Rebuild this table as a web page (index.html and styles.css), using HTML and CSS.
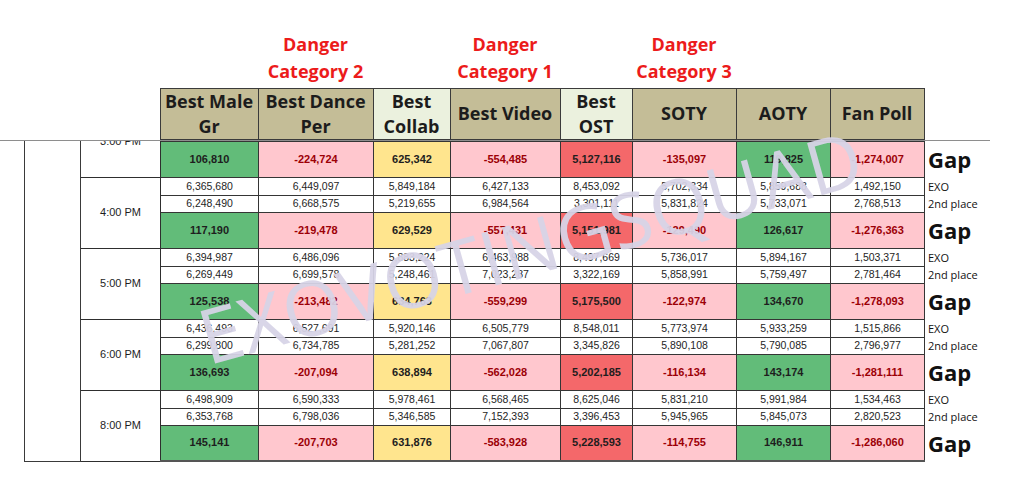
FILE: index.html
```html
<!DOCTYPE html>
<html>
<head>
<meta charset="utf-8">
<link rel="stylesheet" href="styles.css">
</head>
<body>
<div class="sheet">
  <table class="head">
    <colgroup>
      <col class="c-left"><col class="c-time">
      <col class="c-male"><col class="c-dance"><col class="c-collab"><col class="c-video"><col class="c-ost"><col class="c-soty"><col class="c-aoty"><col class="c-fan">
    </colgroup>
    <tr class="danger-row">
      <td colspan="3"></td>
      <td class="danger">Danger<br>Category 2</td>
      <td></td>
      <td class="danger">Danger<br>Category 1</td>
      <td></td>
      <td class="danger">Danger<br>Category 3</td>
      <td colspan="2"></td>
    </tr>
    <tr class="hdr-row">
      <td colspan="2"></td>
      <th class="tan">Best Male<br>Gr</th>
      <th class="tan">Best Dance<br>Per</th>
      <th class="mint">Best<br>Collab</th>
      <th class="tan">Best Video</th>
      <th class="mint">Best<br>OST</th>
      <th class="tan">SOTY</th>
      <th class="tan">AOTY</th>
      <th class="tan">Fan Poll</th>
    </tr>
  </table>

  <div class="pane">
    <table class="grid">
      <colgroup>
        <col class="c-left"><col class="c-time">
        <col class="c-male"><col class="c-dance"><col class="c-collab"><col class="c-video"><col class="c-ost"><col class="c-soty"><col class="c-aoty"><col class="c-fan"><col class="c-label">
      </colgroup>
      <!-- 3:00 PM (scrolled partly out of view) -->
      <tr class="r1">
        <td class="leftcol" rowspan="15"></td>
        <td class="time" rowspan="3">3:00 PM</td>
        <td></td><td></td><td></td><td></td><td></td><td></td><td></td><td></td>
        <td class="lbl">EXO</td>
      </tr>
      <tr class="r2">
        <td></td><td></td><td></td><td></td><td></td><td></td><td></td><td></td>
        <td class="lbl">2nd place</td>
      </tr>
      <tr class="gap">
        <td class="g-green">106,810</td><td class="g-pink">-224,724</td><td class="g-yellow">625,342</td><td class="g-pink">-554,485</td><td class="g-red">5,127,116</td><td class="g-pink">-135,097</td><td class="g-green">119,825</td><td class="g-pink">-1,274,007</td>
        <td class="lbl-gap">Gap</td>
      </tr>

      <!-- 4:00 PM -->
      <tr class="r1">
        <td class="time" rowspan="3">4:00 PM</td>
        <td>6,365,680</td><td>6,449,097</td><td>5,849,184</td><td>6,427,133</td><td>8,453,092</td><td>5,702,334</td><td>5,859,688</td><td>1,492,150</td>
        <td class="lbl">EXO</td>
      </tr>
      <tr class="r2">
        <td>6,248,490</td><td>6,668,575</td><td>5,219,655</td><td>6,984,564</td><td>3,301,111</td><td>5,831,824</td><td>5,733,071</td><td>2,768,513</td>
        <td class="lbl">2nd place</td>
      </tr>
      <tr class="gap">
        <td class="g-green">117,190</td><td class="g-pink">-219,478</td><td class="g-yellow">629,529</td><td class="g-pink">-557,431</td><td class="g-red">5,151,981</td><td class="g-pink">-129,490</td><td class="g-green">126,617</td><td class="g-pink">-1,276,363</td>
        <td class="lbl-gap">Gap</td>
      </tr>

      <!-- 5:00 PM -->
      <tr class="r1">
        <td class="time" rowspan="3">5:00 PM</td>
        <td>6,394,987</td><td>6,486,096</td><td>5,883,224</td><td>6,463,988</td><td>8,497,669</td><td>5,736,017</td><td>5,894,167</td><td>1,503,371</td>
        <td class="lbl">EXO</td>
      </tr>
      <tr class="r2">
        <td>6,269,449</td><td>6,699,578</td><td>5,248,461</td><td>7,023,287</td><td>3,322,169</td><td>5,858,991</td><td>5,759,497</td><td>2,781,464</td>
        <td class="lbl">2nd place</td>
      </tr>
      <tr class="gap">
        <td class="g-green">125,538</td><td class="g-pink">-213,482</td><td class="g-yellow">634,763</td><td class="g-pink">-559,299</td><td class="g-red">5,175,500</td><td class="g-pink">-122,974</td><td class="g-green">134,670</td><td class="g-pink">-1,278,093</td>
        <td class="lbl-gap">Gap</td>
      </tr>

      <!-- 6:00 PM -->
      <tr class="r1">
        <td class="time" rowspan="3">6:00 PM</td>
        <td>6,436,493</td><td>6,527,691</td><td>5,920,146</td><td>6,505,779</td><td>8,548,011</td><td>5,773,974</td><td>5,933,259</td><td>1,515,866</td>
        <td class="lbl">EXO</td>
      </tr>
      <tr class="r2">
        <td>6,299,800</td><td>6,734,785</td><td>5,281,252</td><td>7,067,807</td><td>3,345,826</td><td>5,890,108</td><td>5,790,085</td><td>2,796,977</td>
        <td class="lbl">2nd place</td>
      </tr>
      <tr class="gap">
        <td class="g-green">136,693</td><td class="g-pink">-207,094</td><td class="g-yellow">638,894</td><td class="g-pink">-562,028</td><td class="g-red">5,202,185</td><td class="g-pink">-116,134</td><td class="g-green">143,174</td><td class="g-pink">-1,281,111</td>
        <td class="lbl-gap">Gap</td>
      </tr>

      <!-- 8:00 PM -->
      <tr class="r1">
        <td class="time" rowspan="3">8:00 PM</td>
        <td>6,498,909</td><td>6,590,333</td><td>5,978,461</td><td>6,568,465</td><td>8,625,046</td><td>5,831,210</td><td>5,991,984</td><td>1,534,463</td>
        <td class="lbl">EXO</td>
      </tr>
      <tr class="r2">
        <td>6,353,768</td><td>6,798,036</td><td>5,346,585</td><td>7,152,393</td><td>3,396,453</td><td>5,945,965</td><td>5,845,073</td><td>2,820,523</td>
        <td class="lbl">2nd place</td>
      </tr>
      <tr class="gap last">
        <td class="g-green">145,141</td><td class="g-pink">-207,703</td><td class="g-yellow">631,876</td><td class="g-pink">-583,928</td><td class="g-red">5,228,593</td><td class="g-pink">-114,755</td><td class="g-green">146,911</td><td class="g-pink">-1,286,060</td>
        <td class="lbl-gap">Gap</td>
      </tr>
    </table>
  </div>

  <div class="wm">EXOVOTINGSQUAD</div>
</div>
</body>
</html>
```

FILE: styles.css
```css
* { box-sizing: border-box; }

body {
  margin: 0;
  background: #ffffff;
  font-family: "Liberation Sans", Arial, sans-serif;
  color: #1e1e1e;
}

.sheet {
  position: relative;
  width: 1022px;
  height: 491px;
  overflow: hidden;
}

table {
  border-collapse: collapse;
  table-layout: fixed;
}

.c-left { width: 56px; }
.c-time { width: 80px; }
.c-male { width: 98px; }
.c-dance { width: 115px; }
.c-collab { width: 77px; }
.c-video { width: 110px; }
.c-ost { width: 72px; }
.c-soty { width: 104px; }
.c-aoty { width: 94px; }
.c-fan { width: 94px; }
.c-label { width: 66px; }

/* ---------- frozen header ---------- */
.head {
  margin-left: 24px;
  width: 900px;
}

.head td { padding: 0; }

.danger-row td { height: 88px; }

.danger {
  vertical-align: bottom;
  text-align: center;
  padding-bottom: 3px !important;
  font-family: "Open Sans", "Liberation Sans", sans-serif;
  font-weight: 700;
  font-size: 18px;
  line-height: 27px;
  color: #ec1b1b;
  white-space: nowrap;
}

.hdr-row th {
  height: 51px;
  padding: 0;
  border: 1px solid #3b3b3b;
  text-align: center;
  vertical-align: middle;
  font-family: "Open Sans", "Liberation Sans", sans-serif;
  font-weight: 700;
  font-size: 18px;
  line-height: 25px;
  color: #1c1c1c;
  white-space: nowrap;
}

.tan { background: #c4bd97; }
.mint { background: #ebf1de; }

/* ---------- scrolled pane ---------- */
.pane {
  width: 990px;
  height: 352px;
  border-top: 1px solid #8e8e8e;
  overflow: hidden;
}

.grid {
  margin-left: 24px;
  margin-top: -35px;
  width: 966px;
}

.grid td {
  padding: 0;
  border: 1px solid #353535;
  text-align: center;
  vertical-align: middle;
  font-size: 10.5px;
  line-height: 1;
  color: #1e1e1e;
  white-space: nowrap;
}

.grid .r1 td { height: 18px; }
.grid .r2 td { height: 17px; }
.grid .gap td { height: 36px; font-weight: 700; font-size: 11px; }

.grid .leftcol {
  border: 1px solid #3a3a3a;
  border-top: none;
}

.grid .time {
  font-size: 11px;
  font-weight: 400;
  border: 1px solid #2e2e2e;
}

.grid .last td { border-bottom: 2px solid #555; }
.grid .last .lbl-gap { border-bottom: none; }

.g-green { background: #62bc79; color: #111; }
.g-pink { background: #ffc7ce; color: #9c0006 !important; }
.g-yellow { background: #ffe58e; color: #111; }
.g-red { background: #f4686a; color: #111; }

.grid .lbl,
.grid .lbl-gap {
  border: none;
  text-align: left;
  padding-left: 3px;
  font-family: "Open Sans", "Liberation Sans", sans-serif;
  color: #111;
}

.grid .lbl {
  font-size: 11px;
  font-weight: 400;
}

.grid .gap .lbl-gap {
  font-size: 22px;
  font-weight: 700;
  padding-left: 3px;
}

/* ---------- watermark overlay ---------- */
.wm {
  position: absolute;
  left: 530px;
  top: 246px;
  transform: translate(-50%, -50%) rotate(-15.5deg);
  font-family: "Open Sans", "Liberation Sans", sans-serif;
  font-weight: 400;
  font-size: 76px;
  line-height: 1;
  color: rgba(215, 211, 231, 0.94);
  white-space: nowrap;
  pointer-events: none;
}
```
